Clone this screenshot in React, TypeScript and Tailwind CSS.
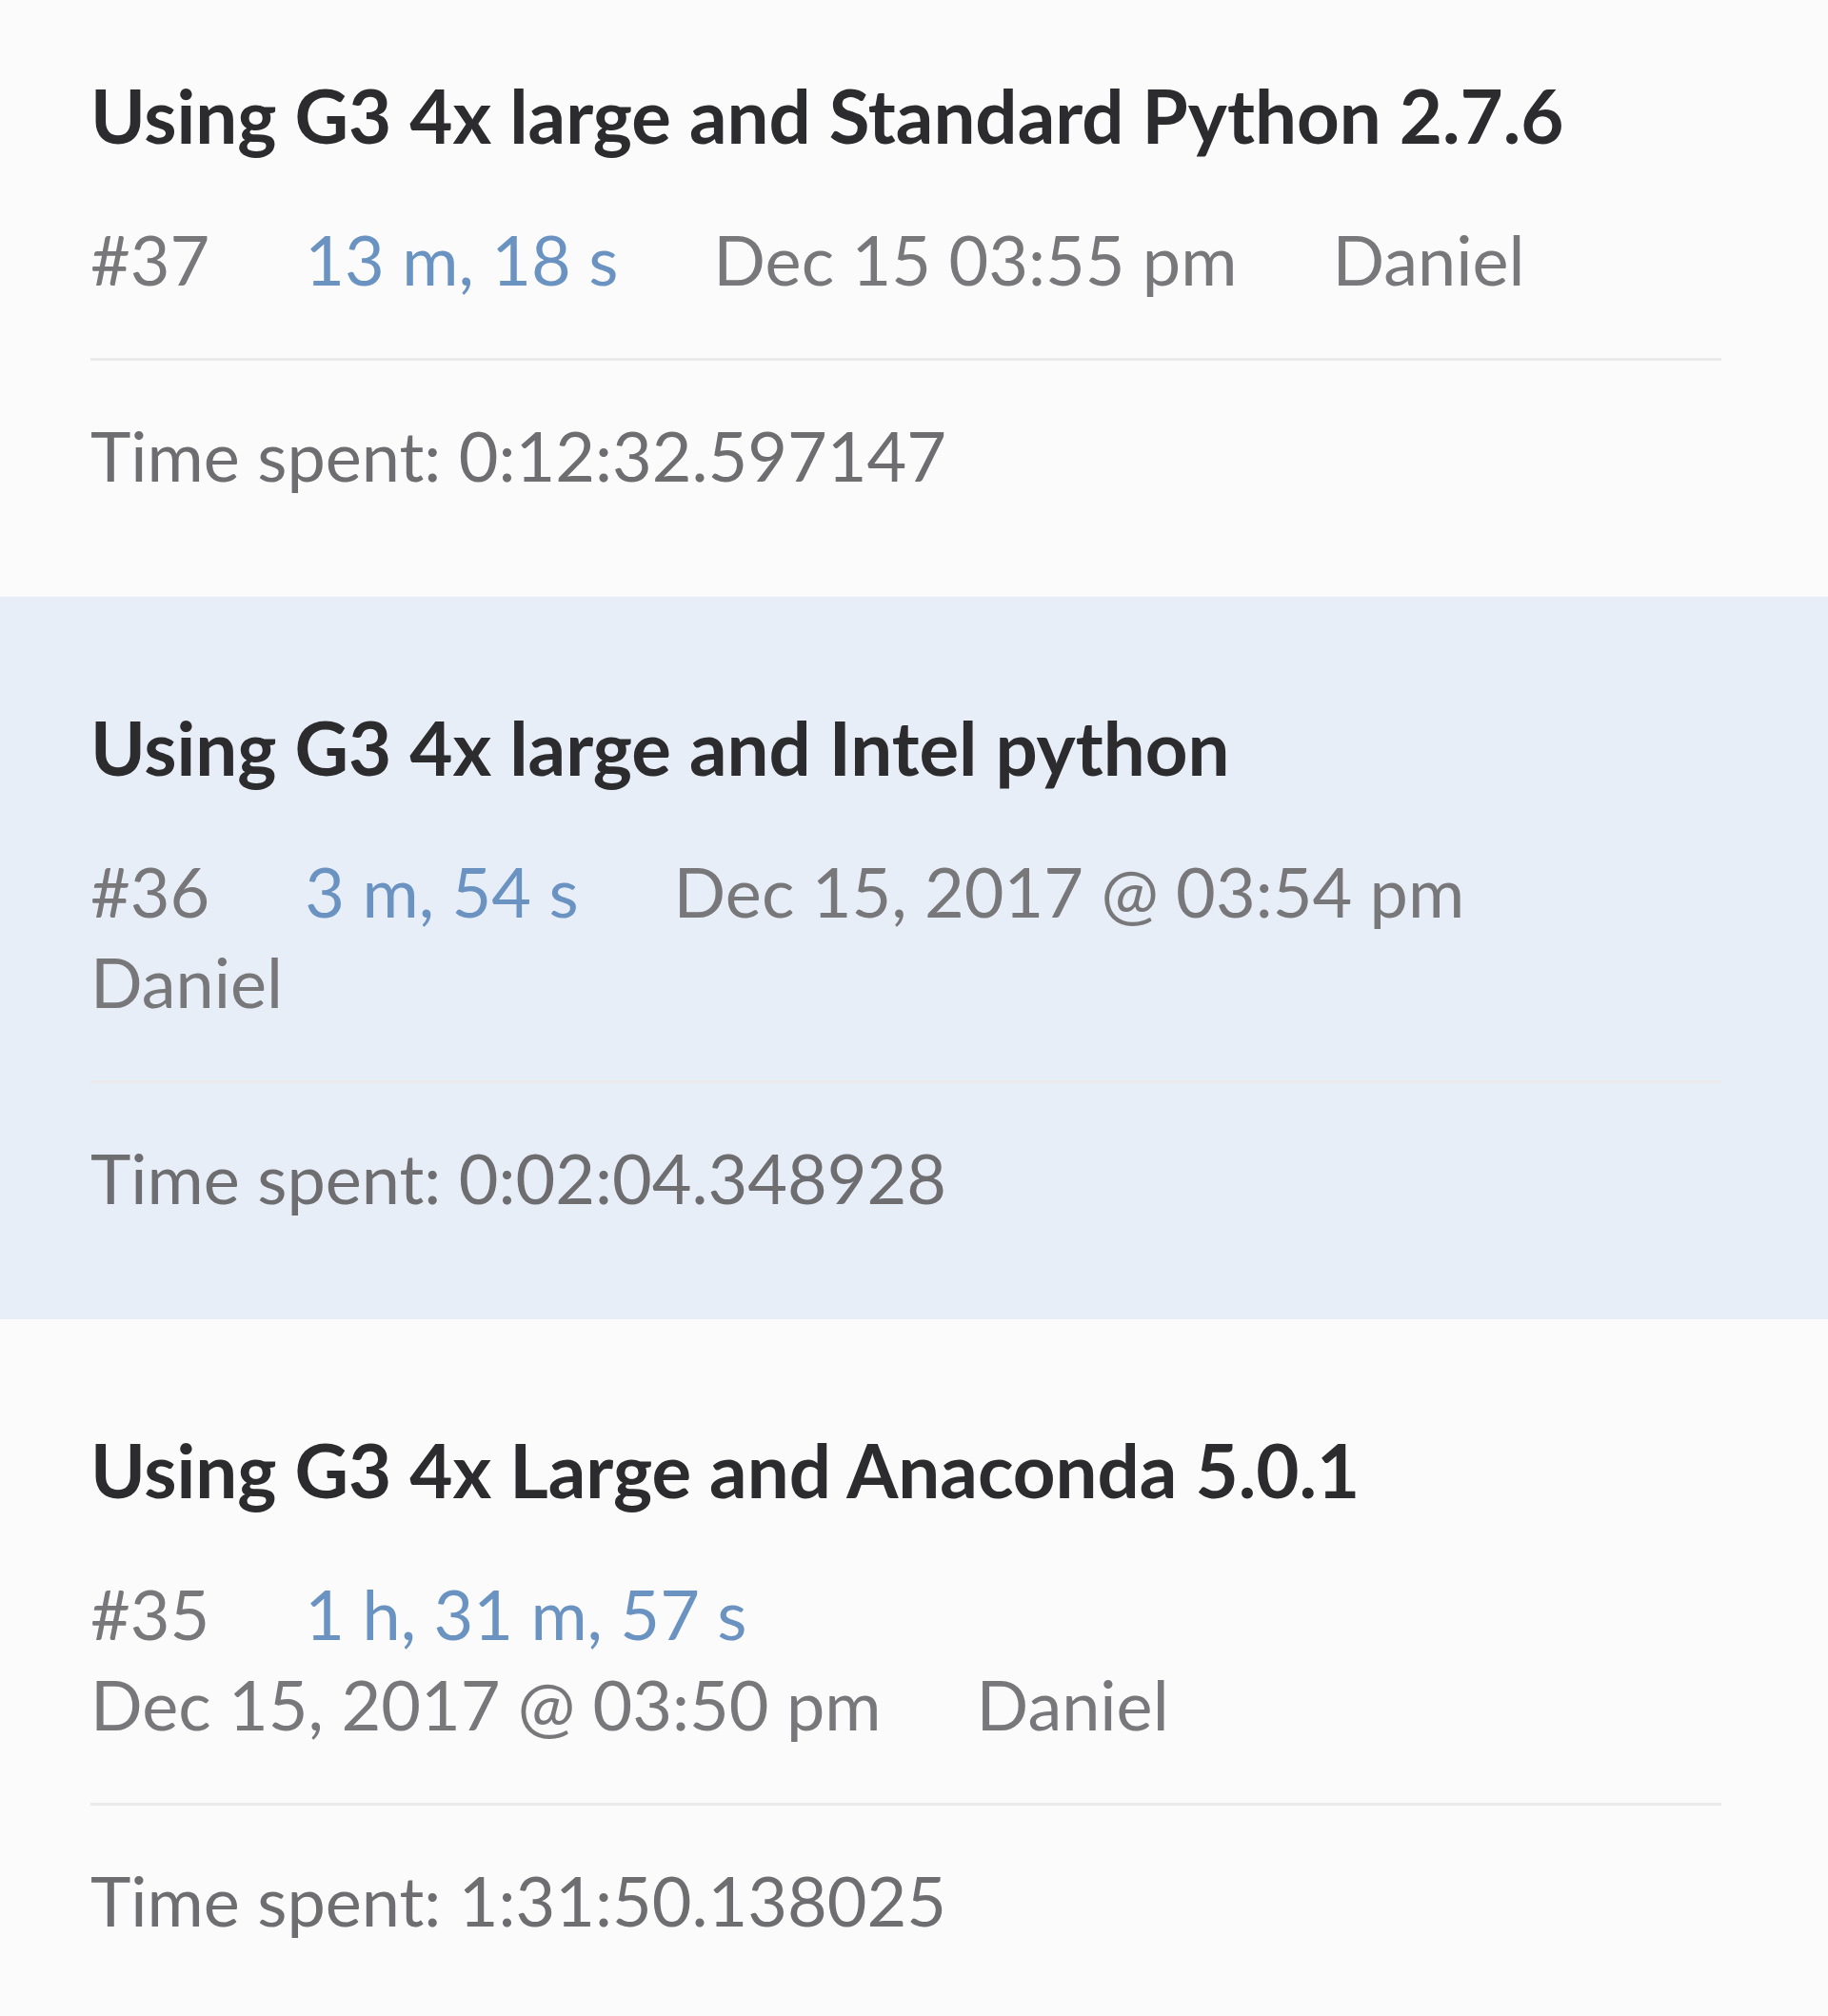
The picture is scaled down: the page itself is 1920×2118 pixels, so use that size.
import React from "react";

type Run = {
  title: string;
  id: string;
  duration: string;
  date: string;
  user: string;
  spent: string;
  active?: boolean;
};

const runs: Run[] = [
  {
    title: "Using G3 4x large and Standard Python 2.7.6",
    id: "#37",
    duration: "13 m, 18 s",
    date: "Dec 15 03:55 pm",
    user: "Daniel",
    spent: "Time spent: 0:12:32.597147",
  },
  {
    title: "Using G3 4x large and Intel python",
    id: "#36",
    duration: "3 m, 54 s",
    date: "Dec 15, 2017 @ 03:54 pm",
    user: "Daniel",
    spent: "Time spent: 0:02:04.348928",
    active: true,
  },
  {
    title: "Using G3 4x Large and Anaconda 5.0.1",
    id: "#35",
    duration: "1 h, 31 m, 57 s",
    date: "Dec 15, 2017 @ 03:50 pm",
    user: "Daniel",
    spent: "Time spent: 1:31:50.138025",
  },
];

function RunItem({ run }: { run: Run }) {
  return (
    <div
      className={`pl-[95px] pr-[112px] pt-[112px] pb-[101px] ${
        run.active ? "bg-[#e8eef8]" : "bg-[#fbfbfb]"
      }`}
    >
      <div className="text-[78px] leading-[92px] font-bold text-[#2c2c2e] whitespace-nowrap">
        {run.title}
      </div>
      <div className="mt-[58px] max-w-[1580px] flex flex-wrap gap-x-[100px] text-[72px] leading-[95px] text-[#78787b]">
        <span>{run.id}</span>
        <span className="text-[#6b93c2]">{run.duration}</span>
        <span>{run.date}</span>
        <span>{run.user}</span>
      </div>
      <div className="mt-[56px] h-[3px] bg-[#eaeaea]" />
      <div className="mt-[52px] text-[72px] leading-[95px] text-[#6e6e71]">
        {run.spent}
      </div>
    </div>
  );
}

export default function App() {
  return (
    <div
      className="w-[1920px] h-[2118px] overflow-hidden bg-[#fbfbfb]"
      style={{ fontFamily: "Lato, 'Open Sans', sans-serif" }}
    >
      <div className="-mt-[37px]">
        {runs.map((r) => (
          <RunItem key={r.id} run={r} />
        ))}
      </div>
    </div>
  );
}
